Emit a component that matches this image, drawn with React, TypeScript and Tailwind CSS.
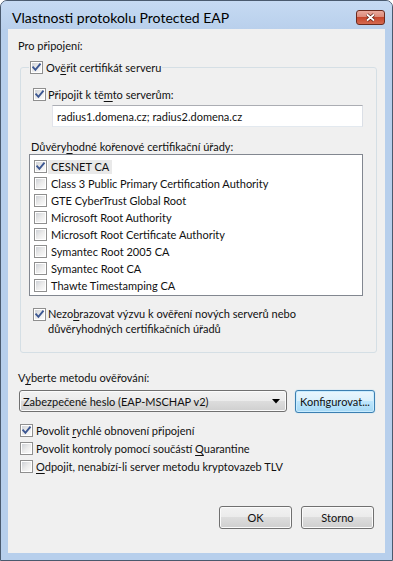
import React from "react";

const Check = ({ checked }: { checked?: boolean }) => (
  <span className="relative inline-block w-[13px] h-[13px] shrink-0 border border-[#8f8f8f] bg-white p-[1px]">
    <span className="block w-full h-full bg-linear-to-br from-[#cfd2d7] via-[#ebebeb] to-[#fbfbfb]" />
    {checked && (
      <svg className="absolute left-0 top-0" width="11" height="11" viewBox="0 0 11 11">
        <path d="M2.2 5.4 L4.4 7.9 L8.9 2.4" fill="none" stroke="#3c5792" strokeWidth="1.9" strokeLinecap="square" />
      </svg>
    )}
  </span>
);

const U = ({ children }: { children: React.ReactNode }) => (
  <span className="underline decoration-1 underline-offset-[2px]">{children}</span>
);

const items = [
  "CESNET CA",
  "Class 3 Public Primary Certification Authority",
  "GTE CyberTrust Global Root",
  "Microsoft Root Authority",
  "Microsoft Root Certificate Authority",
  "Symantec Root 2005 CA",
  "Symantec Root CA",
  "Thawte Timestamping CA",
];

const btn =
  "border border-[#707070] rounded-[3px] bg-[linear-gradient(#f2f2f2,#ebebeb_50%,#dddddd_50%,#cfcfcf)] shadow-[inset_0_0_0_1px_#fbfbfb]";

export default function App() {
  return (
    <div className="w-[393px] h-[561px] bg-white font-['Lato','Liberation_Sans',sans-serif] text-[11px] leading-[15px] text-[#111]">
      <div className="w-full h-full rounded-t-[7px] border border-[#4a5a6e] bg-[#b7cfec] flex flex-col overflow-hidden">
        {/* title bar */}
        <div className="h-[28px] shrink-0 flex items-start pl-[11px] pr-[7px] bg-linear-to-b from-[#c6daf2] to-[#b9d0ec]">
          <span className="mt-[8px] text-[14px] leading-[18px] text-black">Vlastnosti protokolu Protected EAP</span>
          <div className="ml-auto mt-[9px] w-[29px] h-[15px] rounded-[3px] border border-[#6b2a1e] bg-[linear-gradient(#eaa99c,#dc8b7b_45%,#c6462c_50%,#d56a50)] flex items-center justify-center">
            <svg width="11" height="9" viewBox="0 0 11 9">
              <path d="M2 1.5 L9 7.5 M9 1.5 L2 7.5" stroke="#5a1a10" strokeWidth="3.2" />
              <path d="M2 1.5 L9 7.5 M9 1.5 L2 7.5" stroke="#ffffff" strokeWidth="1.8" />
            </svg>
          </div>
        </div>

        {/* client area */}
        <div className="ml-[7px] w-[377px] h-[524px] shrink-0 bg-[#f0f0f0] flex flex-col">
          <div className="ml-[10px] mt-[9px]">Pro připojení:</div>

          <fieldset className="ml-[12px] mt-[7px] w-[357px] border border-[#d5dfe5] rounded-[3px] pb-[16px]">
            <legend className="ml-[8px] px-[1px] h-[14px]">
              <span className="flex items-center h-[14px] gap-[3px]">
                <Check checked />
                <span>
                  Ov<U>ě</U>řit certifikát serveru
                </span>
              </span>
            </legend>

            <div className="ml-[12px] mt-[12px] h-[17px] flex items-center gap-[2px]">
              <Check checked />
              <span>
                Připojit k tě<U>m</U>to serverům:
              </span>
            </div>

            <div className="ml-[31px] mt-[2px] w-[311px] h-[22px] bg-white border border-[#abadb3] border-l-[#e2e3ea] border-r-[#dbdfe6] border-b-[#e3e9ef] flex items-center pl-[4px]">
              radius1.domena.cz; radius2.domena.cz
            </div>

            <div className="ml-[10px] mt-[13px] leading-[14px]">
              Důvěry<U>h</U>odné kořenové certifikační úřady:
            </div>

            <div className="ml-[8px] w-[334px] h-[142px] bg-white border border-[#828790] pt-[3px] pl-[4px]">
              {items.map((t, i) => (
                <div key={t} className="h-[17px] flex items-center">
                  <Check checked={i === 0} />
                  <span className={"ml-[1px] px-[3px] h-[14px] flex items-center " + (i === 0 ? "bg-[#e9e9e9]" : "")}>
                    {t}
                  </span>
                </div>
              ))}
            </div>

            <div className="ml-[12px] mt-[10px] flex items-start gap-[2px]">
              <span className="mt-[2px] flex">
                <Check checked />
              </span>
              <span>
                Nezo<U>b</U>razovat výzvu k ověření nových serverů nebo
                <br />
                důvěryhodných certifikačních úřadů
              </span>
            </div>
          </fieldset>

          <div className="ml-[10px] mt-[17px]">
            V<U>y</U>berte metodu ověřování:
          </div>

          <div className="mt-[5px] flex items-start">
            <div className={"ml-[11px] w-[268px] h-[22px] flex items-center pl-[3px] pr-[6px] " + btn}>
              <span>Zabezpečené heslo (EAP-MSCHAP v2)</span>
              <svg className="ml-auto" width="8" height="5" viewBox="0 0 8 5">
                <path d="M0 0 L8 0 L4 4.5 Z" fill="#000" />
              </svg>
            </div>
            <div className="ml-[8px] w-[80px] h-[23px] rounded-[3px] border border-[#3c7fb1] bg-[linear-gradient(#eaf6fd,#d9f0fc_50%,#bee6fd_50%,#a7d9f5)] shadow-[inset_0_0_0_1px_#c9ecff,0_0_1px_#6fc0ee] flex items-center justify-center whitespace-nowrap">
              Konfigurovat...
            </div>
          </div>

          <div className="ml-[12px] mt-[8px] flex flex-col">
            <div className="h-[18px] flex items-center gap-[3px]">
              <Check checked />
              <span>
                Povolit <U>r</U>ychlé obnovení připojení
              </span>
            </div>
            <div className="h-[18px] flex items-center gap-[3px]">
              <Check />
              <span>
                Povolit kontroly pomocí součástí <U>Q</U>uarantine
              </span>
            </div>
            <div className="h-[18px] flex items-center gap-[3px]">
              <Check />
              <span>
                <U>O</U>dpojit, nenabízí-li server metodu kryptovazeb TLV
              </span>
            </div>
          </div>

          <div className="mt-[31px] mr-[11px] flex justify-end gap-[9px]">
            <div className={"w-[73px] h-[23px] flex items-center justify-center " + btn}>OK</div>
            <div className={"w-[73px] h-[23px] flex items-center justify-center " + btn}>Storno</div>
          </div>
        </div>
      </div>
    </div>
  );
}
